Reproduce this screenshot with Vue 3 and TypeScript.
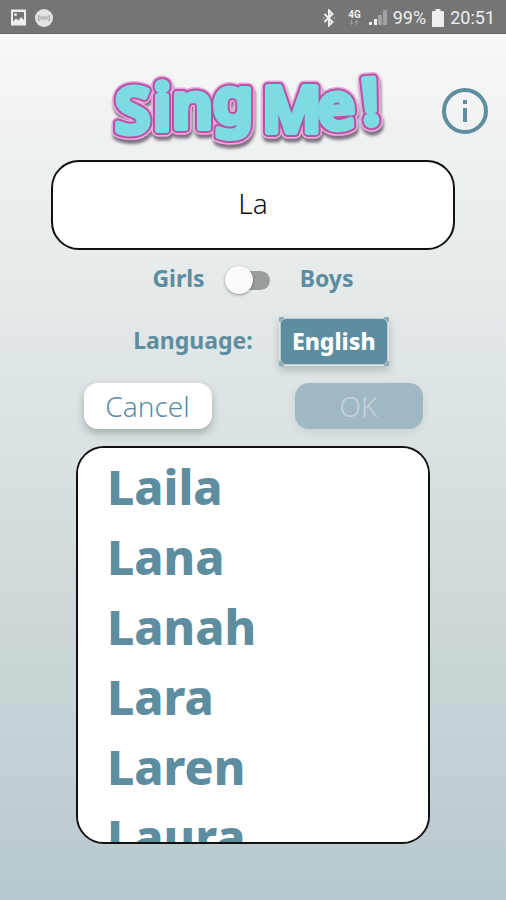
<script setup lang="ts">
import { computed, ref } from 'vue'

const query = ref('La')
const isBoy = ref(false)
const language = ref('English')
const selected = ref('')
const languages = ['English', 'Español', 'Français', 'Deutsch']
const names = ['Laila', 'Lana', 'Lanah', 'Lara', 'Laren', 'Laura']

const matches = computed(() =>
  names.filter((name) => name.toLowerCase().startsWith(query.value.toLowerCase())),
)

function pick(name: string) {
  selected.value = name
  query.value = name
}

function cancel() {
  selected.value = ''
  query.value = ''
}
</script>

<template>
  <div class="app">
    <div class="status">
      <div class="status-group">
        <svg class="status-icon" width="17" height="17" viewBox="0 0 17 17" aria-hidden="true">
          <path fill-rule="evenodd" fill="#eee" d="M1 0.500h15v16H1zM3 3v9.500l3-3 2.500 2L11 8l3 3V3z" />
          <circle cx="5.500" cy="5.500" r="1.500" fill="#eee" />
        </svg>
        <svg class="status-icon" width="18" height="18" viewBox="0 0 18 18" aria-hidden="true">
          <circle cx="9" cy="9" r="9" fill="#e4e4e4" />
          <path d="M3.500 6.500v5l3-2.500zM14.500 6.500v5l-3-2.500zM7 7l4 4M11 7l-4 4" fill="none" stroke="#b0b0b0" stroke-width="1.200" />
        </svg>
      </div>
      <div class="status-group">
        <svg width="14" height="18" viewBox="0 0 14 18" aria-hidden="true">
          <path d="M2.500 5l8 8L7 16.500v-15L10.500 5l-8 8M1.500 9h.5M12 9h.5" fill="none" stroke="#eee" stroke-width="2" />
        </svg>
        <span class="network">
          <span>4G</span>
          <svg width="10" height="5" viewBox="0 0 10 5" aria-hidden="true">
            <path d="M2.500 0v4M1 2.500l1.500 2L4 2.500M7.500 5V1M6 2.500L7.500.5 9 2.500" fill="none" stroke="#a2a2a2" />
          </svg>
        </span>
        <svg class="signal" width="18" height="17" viewBox="0 0 18 17" aria-hidden="true">
          <path d="M0 13h3v3H0zM5 10h3v6H5z" fill="#eee" />
          <path d="M9 6h4v10H9zM14 1h4v15h-4z" fill="#a2a2a2" />
        </svg>
        <span>99%</span>
        <svg class="battery" width="12" height="18" viewBox="0 0 12 18" aria-hidden="true">
          <path d="M3.500 0h5v2H11q1 0 1 1v14q0 1-1 1H1q-1 0-1-1V3q0-1 1-1h2.500z" fill="#eee" />
        </svg>
        <span>20:51</span>
      </div>
    </div>

    <main class="screen">
      <header class="header">
        <h1 class="title">
          <svg class="logo" viewBox="0 0 290 86" role="img" aria-label="Sing Me!">
            <defs>
              <filter id="logo-shadow" x="-5%" y="-10%" width="110%" height="130%">
                <feDropShadow dx="1" dy="4" stdDeviation="1.500" flood-color="#4e3a50" flood-opacity="0.700" />
              </filter>
            </defs>
            <g filter="url(#logo-shadow)">
              <g v-for="layer in ['halo', 'edge', 'face']" :key="layer" :class="layer">
                <text x="13 51 70 111" y="63 60 58 53">Sing</text>
                <text x="160 217 261" y="62 60 55" rotate="0 -4 -4">Me!</text>
              </g>
            </g>
          </svg>
        </h1>
        <button class="info" type="button" aria-label="Information">
          <svg width="48" height="48" viewBox="0 0 48 48" aria-hidden="true">
            <circle cx="24" cy="24" r="21" fill="none" stroke="#5d8d9f" stroke-width="4" />
            <path d="M22 13h4v4h-4zM22 21h4v14h-4z" fill="#5d8d9f" />
          </svg>
        </button>
      </header>

      <input v-model="query" class="search" type="text" aria-label="Name" />

      <div class="gender">
        <label for="gender">Girls</label>
        <input id="gender" v-model="isBoy" class="toggle" type="checkbox" role="switch" />
        <label for="gender">Boys</label>
      </div>

      <div class="language">
        <label for="language">Language:</label>
        <div class="picker">
          <select id="language" v-model="language">
            <option v-for="item in languages" :key="item">{{ item }}</option>
          </select>
        </div>
      </div>

      <div class="actions">
        <button class="action" type="button" @click="cancel">Cancel</button>
        <button class="action" type="button" :disabled="!selected">OK</button>
      </div>

      <ul class="names">
        <li v-for="name in matches" :key="name">
          <button class="name" type="button" @click="pick(name)">{{ name }}</button>
        </li>
      </ul>
    </main>
  </div>
</template>

<style>
body {
  margin: 0;
}
</style>

<style scoped>
.app {
  --teal: #5d8d9f;
  box-sizing: border-box;
  display: flex;
  flex-direction: column;
  height: 100vh;
  background: linear-gradient(#f7f7f7 4%, #e9eded 25%, #d9e1e2 50%, #c9d4d6 75%, #b8c8ce 100%);
  color: var(--teal);
  font-family: "Noto Sans", "Open Sans", sans-serif;
}

input,
select,
button {
  box-sizing: border-box;
  margin: 0;
  padding: 0;
  border: 0;
  font-family: inherit;
}

.status {
  box-sizing: border-box;
  display: flex;
  flex: none;
  align-items: center;
  justify-content: space-between;
  height: 34px;
  padding: 2px 11px 0 10px;
  border-bottom: 1px solid #666;
  background: #757575;
  color: #eee;
  font: 18px/24px Roboto, sans-serif;
}

.status-group {
  display: flex;
  align-items: center;
  gap: 8px;
}

.network {
  display: flex;
  flex-direction: column;
  align-items: center;
  margin-left: 4px;
  font-size: 10px;
  font-weight: 700;
  line-height: 10px;
}

.signal {
  margin-right: -2px;
}

.battery {
  margin: 0 -2px;
}

.screen {
  display: flex;
  flex: 1;
  flex-direction: column;
  align-items: center;
  min-height: 0;
  padding: 32px 0 56px;
}

.header {
  display: grid;
  grid-template-columns: 1fr 290px 1fr;
  align-items: center;
  width: 100%;
  height: 94px;
  flex: none;
}

.title {
  grid-column: 2;
  height: 86px;
  margin: 0 0 0 -6px;
}

.logo {
  display: block;
  width: 290px;
  height: 86px;
  overflow: visible;
  font-size: 64px;
  font-weight: 600;
  stroke-linejoin: round;
}

.halo {
  fill: #eba9dc;
  stroke: #eba9dc;
  stroke-width: 13px;
}

.edge {
  fill: #b951a4;
  stroke: #b951a4;
  stroke-width: 10px;
}

.face {
  fill: #7bdce2;
  stroke: #7bdce2;
  stroke-width: 6px;
}

.info {
  justify-self: end;
  width: 48px;
  height: 48px;
  margin: 0 17px 4px 0;
  background: none;
}

.search {
  flex: none;
  width: 80%;
  height: 90px;
  padding: 0 0 4px;
  border: 2px solid #111;
  border-radius: 28px;
  background: #fff;
  color: #111;
  font-size: 28px;
  font-weight: 300;
  text-align: center;
}

.gender,
.language {
  display: flex;
  flex: none;
  align-items: center;
  font-size: 23px;
  font-weight: 700;
  line-height: 32px;
}

.gender label,
.language label {
  padding-bottom: 4px;
}

.gender {
  gap: 20px;
  margin-top: 12px;
}

.gender label:last-child {
  margin-left: 10px;
}

.toggle {
  position: relative;
  width: 45px;
  height: 30px;
  appearance: none;
}

.toggle::before {
  content: "";
  position: absolute;
  inset: 6px 0 5px 4px;
  border-radius: 10px;
  background: #999d9d;
}

.toggle::after {
  content: "";
  position: absolute;
  top: 1px;
  left: 0;
  width: 28px;
  height: 28px;
  border-radius: 50%;
  background: #fbfbfb;
  box-shadow: 0 1px 3px rgb(0 0 0 / 40%);
}

.toggle:checked::after {
  left: 17px;
}

.language {
  gap: 26px;
  margin-top: 19px;
  margin-left: 16px;
}

.picker {
  padding: 1px;
  background:
    linear-gradient(#8fadb7, #8fadb7) 0 0 / 5px 5px no-repeat,
    linear-gradient(#8fadb7, #8fadb7) 100% 0 / 5px 5px no-repeat,
    linear-gradient(#8fadb7, #8fadb7) 0 100% / 5px 5px no-repeat,
    linear-gradient(#8fadb7, #8fadb7) 100% 100% / 5px 5px no-repeat;
  box-shadow: 0 4px 8px rgb(0 0 0 / 20%);
}

.picker select {
  display: block;
  width: 108px;
  height: 47px;
  padding-bottom: 2px;
  border: 1px solid #b9ccd3;
  border-radius: 6px;
  background: var(--teal);
  color: #fff;
  font-size: 23px;
  font-weight: 800;
  text-align: center;
  text-align-last: center;
  appearance: none;
}

.actions {
  display: flex;
  flex: none;
  gap: 83px;
  margin-top: 17px;
}

.action {
  width: 128px;
  height: 46px;
  border-radius: 14px;
  background: #fff;
  color: var(--teal);
  font-size: 28px;
  font-weight: 300;
  line-height: 44px;
  box-shadow: 0 4px 8px rgb(0 0 0 / 25%);
}

.action:disabled {
  background: #a0b8c1;
  color: #c3d3d9;
  box-shadow: 0 3px 8px rgb(0 0 0 / 8%);
}

.names {
  box-sizing: border-box;
  flex: 1;
  width: 70%;
  min-height: 0;
  margin: 17px 0 0;
  padding: 4px 0 0 29px;
  overflow-y: auto;
  scrollbar-width: none;
  border: 2px solid #111;
  border-radius: 28px;
  background: #fff;
  list-style: none;
}

.name {
  display: block;
  width: 100%;
  height: 70px;
  background: none;
  color: var(--teal);
  font-size: 48px;
  font-weight: 800;
  line-height: 70px;
  text-align: left;
}
</style>
